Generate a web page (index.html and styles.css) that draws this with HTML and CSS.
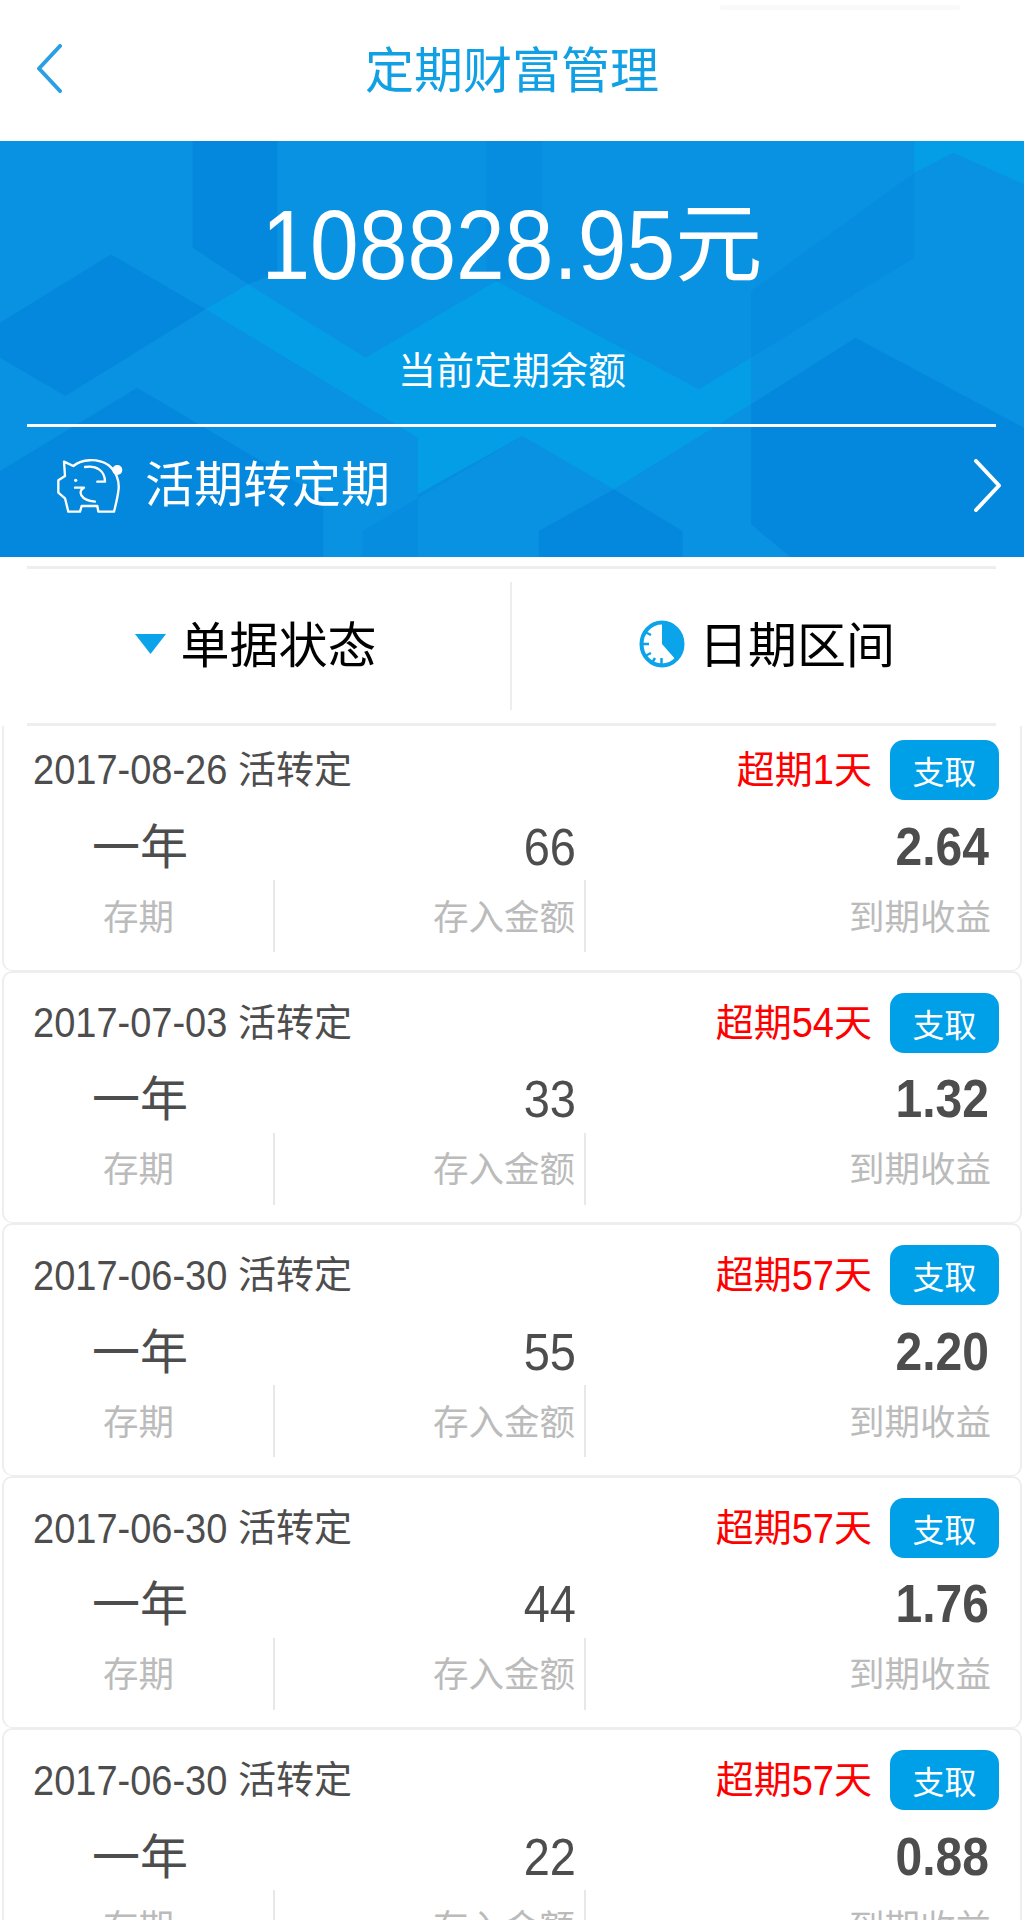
FILE: index.html
```html
<!DOCTYPE html>
<html lang="zh-CN">
<head>
<meta charset="utf-8">
<title>定期财富管理</title>
<link rel="stylesheet" href="styles.css">
</head>
<body>
<div class="page">
  <header class="topbar">
    <svg class="back" viewBox="0 0 26 49"><path d="M24 2 3 24.500 24 47"/></svg>
    <h1 class="title">定期财富管理</h1>
    <span class="ghost"></span>
  </header>

  <section class="hero">
    <svg class="hero-bg" viewBox="0 0 1568 1248" preserveAspectRatio="none">
      <polygon class="lt" points="1400,0 1568,0 1568,130 1460,35 1400,95"/>
      <polygon class="dk" points="295,0 425,0 425,395 380,430 295,320"/>
      <polygon class="dk2" points="745,0 830,0 830,400 760,420 745,400"/>
      <polygon class="dk" points="170,340 315,505 100,765 0,650 0,545"/>
      <polygon class="lt" points="380,430 560,650 760,420 1070,745 1150,650 1150,790 940,1045 800,885 640,1060 640,890 315,505"/>
      <polygon class="dk2" points="1400,95 1400,350 1150,650 1150,450"/>
      <polygon class="dk" points="1310,590 1568,860 1568,1248 1210,1248 1150,1150 1150,790"/>
      <polygon class="dk" points="940,1045 1045,1170 1045,1248 825,1248 825,1170"/>
      <polygon class="dk2" points="800,885 555,1170 555,1248 640,1248 640,1060"/>
      <polygon class="dk" points="210,740 495,1070 495,1248 0,1248 0,990"/>
    </svg>
    <div class="amount"><span class="digits">108828.95</span>元</div>
    <div class="balance-label">当前定期余额</div>
    <div class="hero-rule"></div>
    <div class="transfer">
      <svg class="pig" viewBox="0 0 300 240">
        <path class="pig-line" d="M72 62 100 75C125 55 170 50 205 72 228 90 240 120 235 150 232 175 226 195 222 212H175L172 195H125L120 212H85L75 172 55 155V118L75 105Z"/>
        <circle class="pig-fill" cx="232" cy="87" r="15"/>
        <circle class="pig-fill" cx="107" cy="118" r="5"/>
        <path class="pig-line" d="M135 78C170 72 195 90 195 122H172M105 140H132C112 150 120 178 165 182"/>
      </svg>
      <span class="transfer-text">活期转定期</span>
      <svg class="forward" viewBox="0 0 30 53"><path d="M3 2 26 26.500 3 51"/></svg>
    </div>
  </section>

  <nav class="filters">
    <div class="filters-in">
      <div class="filter filter-left">
        <svg class="tri" viewBox="0 0 31 20"><polygon points="0,0 31,0 15.500,20"/></svg>
        <span class="filter-text">单据状态</span>
      </div>
      <div class="filter-rule"></div>
      <div class="filter filter-right">
        <svg class="clock" viewBox="0 0 46 48">
          <ellipse class="clock-ring" cx="23" cy="24" rx="20.500" ry="21.500"/>
          <path class="clock-wedge" d="M23 2C36 2 44 12 44 24 44 30 42 35 37 40L23 24Z"/>
          <path class="clock-tick" d="M3 24H10M22.500 45V38M6 12 12 15M6 36 12 33M13 43 16 38"/>
        </svg>
        <span class="filter-text">日期区间</span>
      </div>
    </div>
  </nav>

  <main class="list">
    <article class="card">
      <div class="card-top"><span class="date"><span class="digits">2017-08-26</span> 活转定</span><span class="status">超期<span class="digits">1</span>天</span><button class="take">支取</button></div>
      <div class="values"><span class="term">一年</span><span class="money"><span class="digits">66</span></span><span class="gain"><span class="digits">2.64</span></span></div>
      <div class="labels"><span>存期</span><span>存入金额</span><span>到期收益</span></div>
    </article>
    <article class="card">
      <div class="card-top"><span class="date"><span class="digits">2017-07-03</span> 活转定</span><span class="status">超期<span class="digits">54</span>天</span><button class="take">支取</button></div>
      <div class="values"><span class="term">一年</span><span class="money"><span class="digits">33</span></span><span class="gain"><span class="digits">1.32</span></span></div>
      <div class="labels"><span>存期</span><span>存入金额</span><span>到期收益</span></div>
    </article>
    <article class="card">
      <div class="card-top"><span class="date"><span class="digits">2017-06-30</span> 活转定</span><span class="status">超期<span class="digits">57</span>天</span><button class="take">支取</button></div>
      <div class="values"><span class="term">一年</span><span class="money"><span class="digits">55</span></span><span class="gain"><span class="digits">2.20</span></span></div>
      <div class="labels"><span>存期</span><span>存入金额</span><span>到期收益</span></div>
    </article>
    <article class="card">
      <div class="card-top"><span class="date"><span class="digits">2017-06-30</span> 活转定</span><span class="status">超期<span class="digits">57</span>天</span><button class="take">支取</button></div>
      <div class="values"><span class="term">一年</span><span class="money"><span class="digits">44</span></span><span class="gain"><span class="digits">1.76</span></span></div>
      <div class="labels"><span>存期</span><span>存入金额</span><span>到期收益</span></div>
    </article>
    <article class="card">
      <div class="card-top"><span class="date"><span class="digits">2017-06-30</span> 活转定</span><span class="status">超期<span class="digits">57</span>天</span><button class="take">支取</button></div>
      <div class="values"><span class="term">一年</span><span class="money"><span class="digits">22</span></span><span class="gain"><span class="digits">0.88</span></span></div>
      <div class="labels"><span>存期</span><span>存入金额</span><span>到期收益</span></div>
    </article>
  </main>
</div>
</body>
</html>
```

FILE: styles.css
```css
* { box-sizing: border-box; }
html, body { margin: 0; padding: 0; background: #fff; }
body { font-family: "Liberation Sans", "Noto Sans CJK SC", sans-serif; }
.page { width: 1024px; height: 1920px; overflow: hidden; }
.digits { display: inline-block; transform: scaleY(1.12); }

.topbar { position: relative; height: 141px; display: flex; align-items: center; justify-content: center; background: #fff; }
.back { position: absolute; left: 36px; top: 44px; width: 26px; height: 49px; }
.back path { fill: none; stroke: #2a9fe2; stroke-width: 4; stroke-linecap: round; stroke-linejoin: round; }
.title { margin: 0; font-size: 49px; line-height: 60px; font-weight: 400; color: #12a0e4; }
.ghost { position: absolute; left: 720px; top: 5px; width: 240px; height: 5px; border-radius: 3px; background: #f9f9f9; }

.hero { position: relative; height: 416px; padding-top: 54px; color: #fff; background: #0992e2; overflow: hidden; display: flex; flex-direction: column; }
.hero-bg { position: absolute; left: 0; top: 0; width: 100%; height: 100%; }
.hero-bg .lt { fill: #02a4ea; opacity: .65; }
.hero-bg .dk { fill: #0384dc; opacity: .7; }
.hero-bg .dk2 { fill: #0384dc; opacity: .35; }
.amount, .balance-label, .hero-rule, .transfer { position: relative; }
.amount { height: 100px; line-height: 100px; font-size: 87.500px; text-align: center; }
.balance-label { margin-top: 56px; height: 40px; line-height: 40px; font-size: 38px; text-align: center; }
.hero-rule { margin: 33px 28px 0 27px; height: 3px; background: #fff; }
.transfer { height: 116px; display: flex; align-items: center; padding: 0 21px 0 40px; }
.pig { width: 100px; height: 80px; flex: none; margin-top: -8px; }
.pig-line { fill: none; stroke: #fff; stroke-width: 7; stroke-linejoin: round; stroke-linecap: round; }
.pig-fill { fill: #fff; }
.transfer-text { margin-left: 5px; font-size: 49px; line-height: 60px; }
.forward { margin-left: auto; width: 30px; height: 53px; flex: none; }
.forward path { fill: none; stroke: #fff; stroke-width: 4; stroke-linecap: round; stroke-linejoin: round; }

.filters { position: relative; z-index: 1; height: 160px; margin-top: 9px; background: #fff; padding: 0 28px 0 27px; }
.filters-in { height: 100%; display: flex; align-items: center; border-top: 3px solid #eee; border-bottom: 3px solid #eee; }
.filter { flex: 1 1 0; height: 100%; display: flex; align-items: center; justify-content: center; font-size: 49px; color: #000; gap: 14px; padding-bottom: 5px; }
.filter-left { padding-right: 28px; }
.filter-right { padding-left: 26px; }
.filter-text { margin-bottom: 5px; }
.filter-rule { flex: none; width: 2px; height: 128px; margin-left: -3px; background: #eee; }
.tri { width: 31px; height: 20px; flex: none; }
.tri polygon { fill: #0ba3ea; }
.clock { width: 46px; height: 48px; flex: none; }
.clock-ring { fill: #fff; stroke: #0ba3ea; stroke-width: 4; }
.clock-wedge { fill: #0ba3ea; }
.clock-tick { fill: none; stroke: #0ba3ea; stroke-width: 2.500; }

.list { margin: -8px 2px 0; }
.card { height: 252.500px; background: #fff; border: 2px solid #eee; border-bottom-width: 1px; border-radius: 10px; padding: 20px 21px 0 29px; color: #4d4d4d; }
.card-top { height: 60px; display: flex; align-items: center; font-size: 38px; }
.date, .status { margin-top: -7px; }
.date { flex: 1; }
.status { color: #f00; margin-right: 1px; }
.take { width: 109px; height: 60px; margin-left: 17px; padding: 0; border: 0; border-radius: 14px; background: #00a0e9; color: #fff; font: inherit; font-size: 32px; }
.values { margin: 14px 0 0 -29px; height: 66px; display: grid; grid-template-columns: 272px 300px 1fr; align-items: center; }
.term { text-align: center; font-size: 48px; margin-top: -9px; }
.money { text-align: right; font-size: 47px; margin-top: -2px; }
.gain { text-align: right; font-size: 48px; font-weight: 700; padding-right: 10px; margin-top: -2px; }
.labels { margin: 0 0 0 -29px; height: 72px; display: grid; grid-template-columns: 271px 311px 1fr; align-items: center; font-size: 35.500px; color: #bbb; }
.labels span { height: 100%; display: flex; align-items: center; padding-bottom: 4px; }
.labels span:nth-child(1) { justify-content: center; border-right: 2px solid #e8e8e8; }
.labels span:nth-child(2) { justify-content: flex-end; padding-right: 9px; border-right: 2px solid #e8e8e8; }
.labels span:nth-child(3) { justify-content: flex-end; padding-right: 8px; }
```
